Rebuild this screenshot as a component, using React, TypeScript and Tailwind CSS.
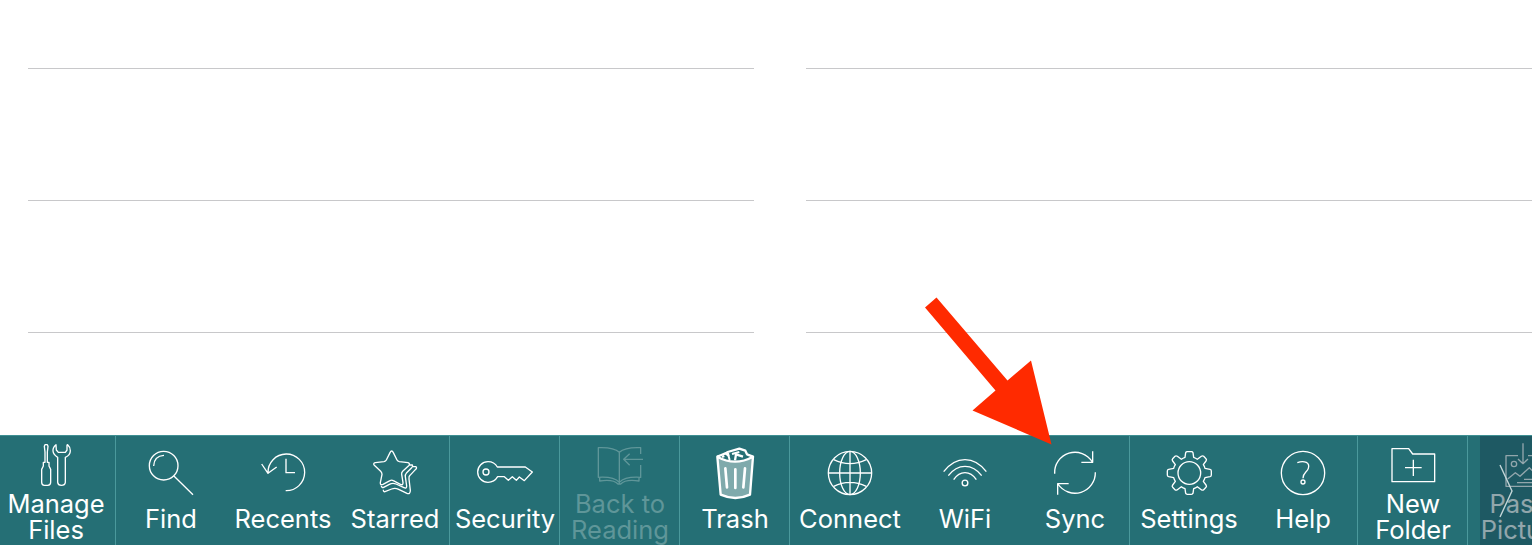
import type { ReactNode } from 'react';

type Item = {
  lines: string[];
  width: string;
  viewBox: string;
  icon: ReactNode;
  divider?: boolean;
  dim?: boolean;
};

const items: Item[] = [
  {
    lines: ['Manage', 'Files'],
    width: 'w-[116px] pr-1',
    viewBox: '72 18 192 180',
    divider: true,
    icon: (
      <g>
        <path d="M135 44 H142 L144 49 L142 66 V97 H147 V108 L152 118 V157 Q152 166 143 166 H133 Q125 166 125 157 V118 L130 108 V97 H135 V66 L133 49 Z" />
        <path d="M168 44 Q158 52 159 63 Q160 74 173 82 V157 Q174 166 184 166 Q195 166 196 157 V82 Q211 75 211 62 Q211 51 203 44 L201 45 V60 L196 67 H175 L169 60 Z" />
      </g>
    ),
  },
  {
    lines: ['Find'],
    width: 'w-[110px]',
    viewBox: '417 18 192 180',
    icon: (
      <g>
        <circle cx="491" cy="107" r="43" />
        <path d="M461 108 Q462 78 492 76 M521 137 L579 194" />
      </g>
    ),
  },
  {
    lines: ['Recents'],
    width: 'w-[114px]',
    viewBox: '78 18 192 180',
    icon: <path d="M129 129 A55 55 0 1 1 182 182 M110 102 L129 130 L155 111 M183 86 V128 H210" />,
  },
  {
    lines: ['Starred'],
    width: 'w-[110px]',
    viewBox: '414 18 192 180',
    divider: true,
    icon: (
      <g>
        <path d="M495 68 Q500 58 505 68 L516 90 Q518 94 523 95 L549 98 Q557 101 551 107 L533 124 Q529 128 530 133 L534 158 Q534 167 526 163 L505 152 Q500 149 495 152 L474 163 Q465 167 466 158 L471 133 Q471 128 467 124 L448 106 Q443 100 451 98 L477 95 Q482 94 484 90 Z" />
        <path d="M553 105 L562 105 Q565 109 560 113 L545 128 Q540 134 541 140 L545 168 Q545 177 537 173 L513 162 Q503 158 493 163 L476 172 Q470 174 469 168 M564 110 L573 110 Q577 114 571 119 L555 136 Q551 140 552 147 L556 181 Q556 194 546 190 L521 178 Q510 173 500 177 L480 185 Q475 186 475 179" />
      </g>
    ),
  },
  {
    lines: ['Security'],
    width: 'w-[110px]',
    viewBox: '84 18 192 180',
    divider: true,
    icon: (
      <g>
        <path d="M157 111 Q148 95 129 95 A31 31 0 0 0 129 157 Q148 157 158 140 H178 L190 151 L202 140 L214 151 L223 141 L238 152 L262 126 L241 111 Z" />
        <circle cx="123" cy="126" r="9" />
      </g>
    ),
  },
  {
    lines: ['Back to', 'Reading'],
    width: 'w-[120px]',
    viewBox: '429 18 192 180',
    divider: true,
    dim: true,
    icon: (
      <path d="M523 67 Q506 51 460 53 V142 Q506 139 523 157 Q540 139 587 142 V105 M523 67 Q540 51 587 53 V72 M523 67 V163 M464 143 V153 Q505 147 519 162 H527 Q541 147 582 153 V143 M594 88 H536 M554 71 L536 88 L554 106" />
    ),
  },
  {
    lines: ['Trash'],
    width: 'w-[110px]',
    viewBox: '84 18 192 180',
    divider: true,
    icon: (
      <g strokeWidth="7">
        <path d="M127 80 Q180 110 234 80 L225 194 Q181 214 137 194 Z" fill="#7faaac" />
        <path d="M127 80 L139 75 L151 70 L160 76 L158 66 L193 56 L211 62 L216 73 L234 80 M180 91 L183 73 L204 80" />
        <path d="M160 76 L164 90 M151 70 L158 66 M141 81 L148 78 M171 72 L193 66" strokeWidth="6" />
        <path d="M151 115 L156 172 M181 118 V174 M210 115 L205 172" strokeLinecap="round" strokeWidth="8" />
      </g>
    ),
  },
  {
    lines: ['Connect'],
    width: 'w-[120px]',
    viewBox: '429 18 192 180',
    icon: (
      <g>
        <circle cx="525" cy="129" r="65" />
        <ellipse cx="525" cy="129" rx="31" ry="65" />
        <path d="M460 129 H590 M525 64 V194 M476 89 Q525 113 574 89 M476 169 Q525 145 574 169" />
      </g>
    ),
  },
  {
    lines: ['WiFi'],
    width: 'w-[110px]',
    viewBox: '84 18 192 180',
    icon: (
      <g>
        <path d="M116 125 Q144 89 180 89 Q216 89 244 125 M130 137 Q151 109 180 109 Q209 109 230 137 M146 149 Q160 128 180 128 Q200 128 214 149" />
        <circle cx="180" cy="159" r="8.5" />
      </g>
    ),
  },
  {
    lines: ['Sync'],
    width: 'w-[110px]',
    viewBox: '414 18 192 180',
    divider: true,
    icon: (
      <path d="M449 131 A61 61 0 0 1 562 96 M563 64 V97 H529 M571 127 A61 61 0 0 1 459 162 M458 194 V161 H491" />
    ),
  },
  {
    lines: ['Settings'],
    width: 'w-[118px]',
    viewBox: '96 18 192 180',
    icon: (
      <g>
        <circle cx="193" cy="129" r="34" />
        <path d="M182 68 Q183 65 187 65 H199 Q203 65 204 68 L206 82 Q212 84 217 88 L229 79 Q233 76 236 79 L243 86 Q246 89 243 93 L235 104 Q239 110 240 115 L255 118 Q259 119 259 123 V135 Q259 139 255 140 L240 143 Q239 148 235 154 L243 165 Q246 169 243 172 L236 179 Q233 182 229 179 L217 170 Q212 174 206 176 L204 190 Q203 193 199 193 H187 Q183 193 182 190 L180 176 Q174 174 169 170 L157 179 Q153 182 150 179 L143 172 Q140 169 143 165 L151 154 Q147 148 146 143 L131 140 Q127 139 127 135 V123 Q127 119 131 118 L146 115 Q147 110 151 104 L143 93 Q140 89 143 86 L150 79 Q153 76 157 79 L169 88 Q174 84 180 82 Z" />
      </g>
    ),
  },
  {
    lines: ['Help'],
    width: 'w-[110px]',
    viewBox: '438 18 192 180',
    divider: true,
    icon: (
      <g>
        <circle cx="534" cy="129" r="65" />
        <path d="M517 98 Q532 92 544 97 Q554 102 550 115 C547 126 534 127 534 145" />
        <circle cx="534" cy="156" r="6" />
      </g>
    ),
  },
  {
    lines: ['New', 'Folder'],
    width: 'w-[110px]',
    viewBox: '93 18 192 180',
    divider: true,
    icon: <path d="M126 56 H176 L188 72 H254 V155 H126 Z M190 89 V138 M165 113 H215" />,
  },
  {
    lines: ['Paste', 'Picture'],
    width: 'w-[110px]',
    viewBox: '423 18 192 180',
    icon: (
      <g>
        <path d="M504 77 H468 V169 H570 V77 H534 M519 40 V101 M504 87 L519 101 L534 87 M473 147 L496 128 L510 139 L538 113 L567 142 M522 148 H560 M501 158 H560" />
        <circle cx="492" cy="102" r="8" />
      </g>
    ),
  },
];

function ToolbarItem({ item }: { item: Item }) {
  return (
    <button
      className={`${item.width} flex h-full shrink-0 flex-col items-center ${
        item.divider ? 'shadow-[inset_-1px_0_0_#4b999c]' : ''
      } ${item.dim ? 'text-[#5f9699]' : 'text-white'}`}
    >
      <svg
        className="h-[60px] w-16 shrink-0 overflow-visible"
        viewBox={item.viewBox}
        fill="none"
        stroke="currentColor"
        strokeWidth="4"
        strokeLinejoin="round"
        aria-hidden="true"
      >
        {item.icon}
      </svg>
      <span
        className={`flex flex-col items-center whitespace-nowrap text-[25.5px] leading-[26px] ${
          item.lines.length > 1 ? '-mt-[5px]' : 'mt-[10px]'
        }`}
      >
        {item.lines.map((line) => (
          <span key={line}>{line}</span>
        ))}
      </span>
    </button>
  );
}

function Column({ className }: { className: string }) {
  return (
    <div className={`w-[726px] shrink-0 ${className}`}>
      <div className="h-[69px] border-b border-[#c8c8ca]" />
      <div className="h-[132px] border-b border-[#c8c8ca]" />
      <div className="h-[132px] border-b border-[#c8c8ca]" />
    </div>
  );
}

export default function App() {
  return (
    <div className="relative flex h-[545px] w-[1532px] flex-col overflow-hidden bg-white font-['Inter','Liberation_Sans',sans-serif]">
      <main className="flex h-[435px] shrink-0">
        <Column className="ml-7" />
        <Column className="ml-[52px]" />
      </main>
      <nav className="relative flex h-[110px] shrink-0 overflow-hidden border-t border-[#3f9093] bg-[#256f75]">
        {items.map((item) => (
          <ToolbarItem key={item.lines[0]} item={item} />
        ))}
        <div className="absolute top-0 right-0 h-full w-[52px] bg-[#18424f]/47">
          <svg className="h-full w-full" viewBox="0 0 52 109" fill="none" stroke="#c3d6d8" strokeWidth="1.4" aria-hidden="true">
            <path d="M20 29 L32 55 L20 81" />
          </svg>
        </div>
      </nav>
      <svg
        className="pointer-events-none absolute top-[297px] left-[924px] h-[149px] w-[129px]"
        viewBox="924 297 129 149"
        fill="#ff2a00"
        aria-hidden="true"
      >
        <path d="M925 307.5 L936.5 297.5 L1007.5 380.5 L1031 360.5 L1051.5 444.5 L972.5 410.5 L995.5 390.5 Z" />
      </svg>
    </div>
  );
}
